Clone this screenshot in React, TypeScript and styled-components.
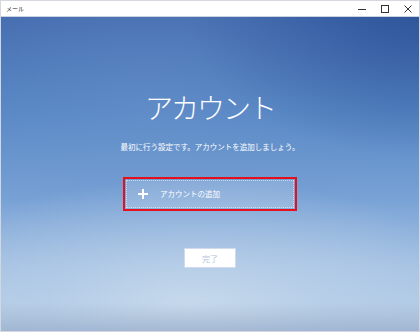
import React from "react";
import styled, { createGlobalStyle } from "styled-components";

const Global = createGlobalStyle`
  html, body { margin: 0; padding: 0; }
  body { width: 420px; height: 332px; overflow: hidden; font-family: "Noto Sans CJK JP", "Noto Sans", sans-serif; }
`;

const Window = styled.div`
  width: 420px;
  height: 332px;
  box-sizing: border-box;
  border: 1px solid #d4d8de;
  display: flex;
  flex-direction: column;
  background: #ffffff;
`;

const TitleBar = styled.div`
  height: 15px;
  flex: none;
  display: flex;
  align-items: center;
  justify-content: space-between;
  background: #ffffff;
  border-bottom: 1px solid #c9d3e2;
  padding-left: 5px;
`;

const TitleText = styled.span`
  font-size: 6px;
  color: #222;
  line-height: 8px;
`;

const Controls = styled.div`
  display: flex;
  height: 100%;
`;

const Ctrl = styled.div`
  width: 23px;
  height: 100%;
  display: flex;
  align-items: center;
  justify-content: center;
  color: #222;
`;

const Body = styled.div`
  flex: 1;
  display: flex;
  flex-direction: column;
  align-items: center;
  padding-top: 72px;
  background:
    linear-gradient(180deg, rgba(0,0,0,0) 0%, rgba(0,0,0,0) 91%, rgba(150,165,190,0.25) 95%, rgba(130,150,185,0.45) 100%),
    radial-gradient(ellipse 75% 40% at 45% 92%, rgba(200,218,236,0.95) 0%, rgba(188,210,234,0.6) 45%, rgba(160,190,225,0) 100%),
    radial-gradient(ellipse 55% 45% at 100% 0%, rgba(35,70,140,0.55) 0%, rgba(35,70,140,0) 100%),
    radial-gradient(ellipse 60% 70% at 35% 30%, rgba(110,150,205,0.4) 0%, rgba(110,150,205,0) 100%),
    linear-gradient(180deg, #4169ad 0%, #5686c4 30%, #79a3d6 58%, #a3c0e2 80%, #b8cfe7 100%);
  background-color: #5585c3;
`;

const Heading = styled.h1`
  margin: 0;
  font-size: 28px;
  line-height: 36px;
  font-weight: 300;
  color: #ffffff;
  letter-spacing: -2px;
`;

const Sub = styled.p`
  margin: 16px 0 0;
  font-size: 7.5px;
  line-height: 12px;
  color: #ffffff;
`;

const Highlight = styled.div`
  margin-top: 24px;
  width: 174px;
  height: 34px;
  box-sizing: border-box;
  border: 2px solid #e5101c;
  padding: 1px;
`;

const AddButton = styled.div`
  width: 100%;
  height: 100%;
  box-sizing: border-box;
  border: 1px dotted rgba(255,255,255,0.55);
  background: rgba(255,255,255,0.16);
  display: flex;
  align-items: center;
  padding-left: 11px;
  gap: 12px;
`;

const AddText = styled.span`
  font-size: 7.5px;
  color: #ffffff;
  line-height: 10px;
`;

const Done = styled.div`
  margin-top: 37px;
  width: 52px;
  height: 20px;
  box-sizing: border-box;
  background: #ffffff;
  border: 1px solid #d0dcec;
  display: flex;
  align-items: center;
  justify-content: center;
  font-size: 8px;
  color: #b4c6dc;
`;

export default function App() {
  return (
    <>
      <Global />
      <Window>
        <TitleBar>
          <TitleText>メール</TitleText>
          <Controls>
            <Ctrl>
              <svg width="8" height="8" viewBox="0 0 8 8"><line x1="0" y1="4.5" x2="8" y2="4.5" stroke="#333" strokeWidth="1" /></svg>
            </Ctrl>
            <Ctrl>
              <svg width="8" height="8" viewBox="0 0 8 8"><rect x="0.5" y="0.5" width="7" height="7" fill="none" stroke="#333" strokeWidth="1" /></svg>
            </Ctrl>
            <Ctrl>
              <svg width="8" height="8" viewBox="0 0 8 8"><path d="M0.5 0.5 L7.5 7.5 M7.5 0.5 L0.5 7.5" stroke="#333" strokeWidth="1" /></svg>
            </Ctrl>
          </Controls>
        </TitleBar>
        <Body>
          <Heading>アカウント</Heading>
          <Sub>最初に行う設定です。アカウントを追加しましょう。</Sub>
          <Highlight>
            <AddButton>
              <svg width="10" height="10" viewBox="0 0 10 10">
                <path d="M5 0 V10 M0 5 H10" stroke="#fff" strokeWidth="2" />
              </svg>
              <AddText>アカウントの追加</AddText>
            </AddButton>
          </Highlight>
          <Done>完了</Done>
        </Body>
      </Window>
    </>
  );
}
